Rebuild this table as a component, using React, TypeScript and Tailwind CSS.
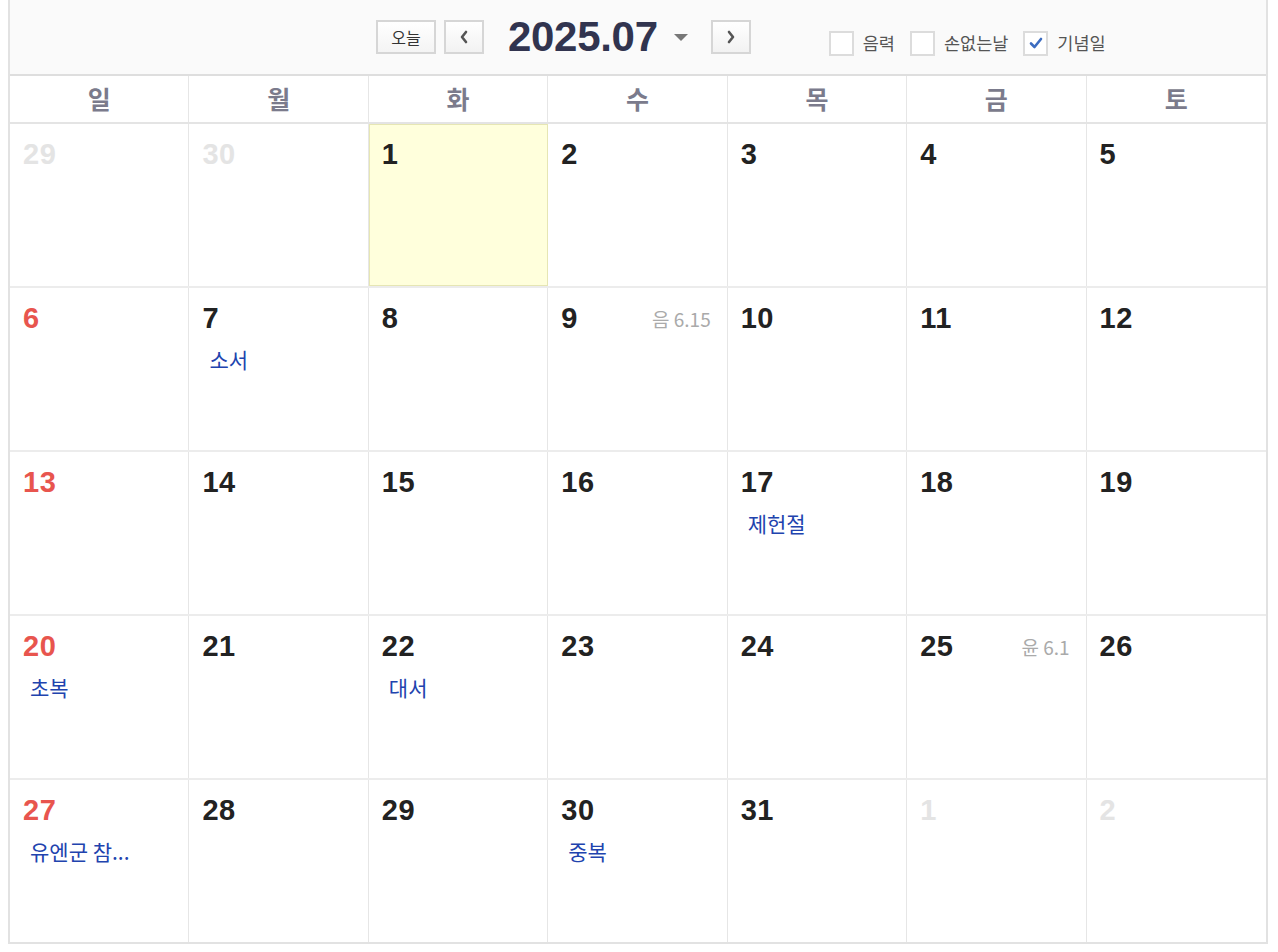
import React from "react";

const KR = { fontFamily: '"Noto Sans CJK KR", "Noto Sans", sans-serif' };
const NUM = { fontFamily: '"Liberation Sans", Arial, "Noto Sans CJK KR", sans-serif' };

const DAY_NAMES = ["일", "월", "화", "수", "목", "금", "토"];

type Cell = {
  day: number;
  muted?: boolean;
  today?: boolean;
  event?: string;
  lunar?: string;
};

const WEEKS: Cell[][] = [
  [{ day: 29, muted: true }, { day: 30, muted: true }, { day: 1, today: true }, { day: 2 }, { day: 3 }, { day: 4 }, { day: 5 }],
  [{ day: 6 }, { day: 7, event: "소서" }, { day: 8 }, { day: 9, lunar: "음 6.15" }, { day: 10 }, { day: 11 }, { day: 12 }],
  [{ day: 13 }, { day: 14 }, { day: 15 }, { day: 16 }, { day: 17, event: "제헌절" }, { day: 18 }, { day: 19 }],
  [{ day: 20, event: "초복" }, { day: 21 }, { day: 22, event: "대서" }, { day: 23 }, { day: 24 }, { day: 25, lunar: "윤 6.1" }, { day: 26 }],
  [{ day: 27, event: "유엔군 참..." }, { day: 28 }, { day: 29 }, { day: 30, event: "중복" }, { day: 31 }, { day: 1, muted: true }, { day: 2, muted: true }],
];

function Checkbox({ label, checked }: { label: string; checked?: boolean }) {
  return (
    <label className="flex items-center gap-[9px]">
      <span className="w-[25px] h-[25px] border-2 border-[#dcdcdc] bg-white flex items-center justify-center">
        {checked && (
          <svg width="14" height="12" viewBox="0 0 14 12">
            <path d="M2 6.5 L5.5 10 L12 2" fill="none" stroke="#3c6cc0" strokeWidth="2.6" strokeLinecap="round" strokeLinejoin="round" />
          </svg>
        )}
      </span>
      <span className="text-[17.5px] text-[#555] leading-none" style={KR}>
        {label}
      </span>
    </label>
  );
}

function NavButton({ dir }: { dir: "prev" | "next" }) {
  return (
    <button className="w-[40px] h-[34px] border-2 border-[#d6d6d6] bg-gradient-to-b from-white to-[#f2f2f2] flex items-center justify-center">
      <svg width="10" height="14" viewBox="0 0 10 14">
        <path
          d={dir === "prev" ? "M7 2 L3 7 L7 12" : "M3 2 L7 7 L3 12"}
          fill="none"
          stroke="#555"
          strokeWidth="2.6"
          strokeLinecap="round"
          strokeLinejoin="round"
        />
      </svg>
    </button>
  );
}

export default function App() {
  return (
    <div className="bg-white min-h-[952px]">
      <div className="ml-[8px] w-[1260px] border-x-2 border-[#e2e2e2]">
        {/* Toolbar */}
        <div className="h-[76px] bg-[#fafafa] border-b-2 border-[#dedede] flex items-center pl-[366px]">
          <button
            className="w-[60px] h-[34px] border-2 border-[#d6d6d6] bg-gradient-to-b from-white to-[#f4f4f4] text-[16px] text-[#333] leading-none"
            style={KR}
          >
            오늘
          </button>
          <div className="ml-[8px]">
            <NavButton dir="prev" />
          </div>
          <div
            className="ml-[24px] text-[42px] font-bold text-[#31344f] leading-none tracking-[-0.3px]"
            style={NUM}
          >
            2025.07
          </div>
          <svg className="ml-[15px]" width="16" height="9" viewBox="0 0 16 9">
            <path d="M1 1 L15 1 L8 8 Z" fill="#777" />
          </svg>
          <div className="ml-[22px]">
            <NavButton dir="next" />
          </div>
          <div className="ml-[78px] mt-[12px] flex items-center gap-[15px]">
            <Checkbox label="음력" />
            <Checkbox label="손없는날" />
            <Checkbox label="기념일" checked />
          </div>
        </div>

        {/* Day names */}
        <div className="grid grid-cols-7 border-b-2 border-[#e4e4e4]">
          {DAY_NAMES.map((d, i) => (
            <div
              key={d}
              className={`h-[46px] flex items-center justify-center text-[25px] font-bold text-[#7b7b8c] ${i < 6 ? "border-r border-[#e6e6e6]" : ""}`}
              style={KR}
            >
              {d}
            </div>
          ))}
        </div>

        {/* Weeks */}
        {WEEKS.map((week, wi) => (
          <div
            key={wi}
            className={`grid grid-cols-7 ${wi < 4 ? "border-b-2 border-[#ececec]" : "border-b-2 border-[#e2e2e2]"}`}
          >
            {week.map((c, ci) => {
              const color = c.muted ? "text-[#e4e4e4]" : ci === 0 ? "text-[#e8554e]" : "text-[#222]";
              return (
                <div
                  key={ci}
                  className={`h-[162px] relative pt-[14px] ${ci < 6 ? "border-r border-[#e6e6e6]" : ""} ${
                    c.today ? "bg-[#ffffdc] outline outline-1 outline-[#e6e6b4] -outline-offset-1" : ""
                  }`}
                >
                  <div className="flex items-center justify-between pl-[13px] pr-[16px] h-[32px]">
                    <span className={`text-[29px] font-bold leading-none tracking-[0.5px] ${color}`} style={NUM}>
                      {c.day}
                    </span>
                    {c.lunar && (
                      <span className="text-[19px] text-[#aaa] leading-none" style={KR}>
                        {c.lunar}
                      </span>
                    )}
                  </div>
                  {c.event && (
                    <div className="mt-[13px] pl-[20px] text-[21px] leading-[24px] text-[#2143ae]" style={KR}>
                      {c.event}
                    </div>
                  )}
                </div>
              );
            })}
          </div>
        ))}
      </div>
    </div>
  );
}
